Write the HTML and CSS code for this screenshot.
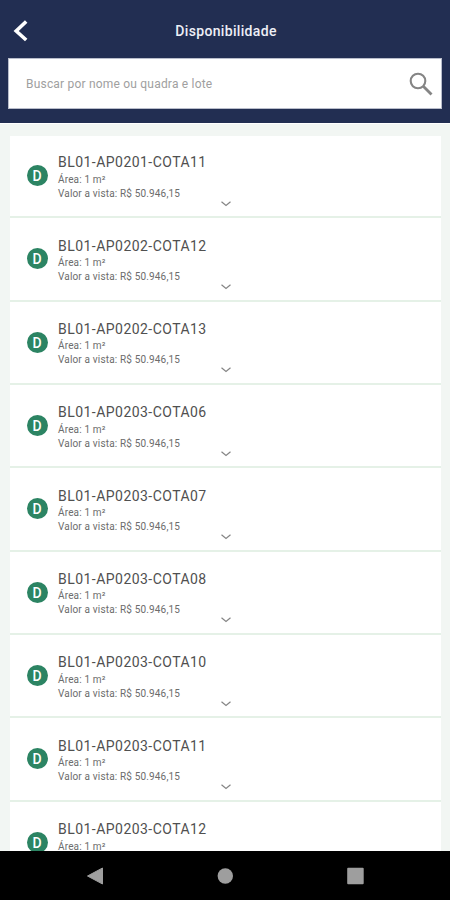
FILE: index.html
```html
<!DOCTYPE html>
<html lang="pt-BR">
<head>
<meta charset="utf-8">
<title>Disponibilidade</title>
<link rel="stylesheet" href="styles.css">
</head>
<body>
<svg class="defs" width="0" height="0"><symbol id="chevron" viewBox="0 0 12 8"><path d="M1.500 1.700 6 5.500l4.500-3.800" fill="none" stroke="#858585" stroke-width="1.200"/></symbol></svg>
<div class="screen">
  <header class="header">
    <div class="titlebar">
      <svg class="back" width="16" height="22" viewBox="0 0 16 22"><path d="M13.200 1.500 3.200 11l10 9" fill="none" stroke="#fff" stroke-width="3.600"/></svg>
      <h1 class="title">Disponibilidade</h1>
    </div>
    <div class="search">
      <span class="placeholder">Buscar por nome ou quadra e lote</span>
      <svg class="lens" width="24" height="24" viewBox="0 0 24 24"><circle cx="9" cy="9" r="7.300" fill="none" stroke="#858585" stroke-width="2.100"/><path d="m14.500 14.500 8 8" stroke="#858585" stroke-width="2.800"/></svg>
    </div>
  </header>
  <main class="list">
    <article class="card"><span class="badge">D</span><div class="info"><h2 class="name">BL01-AP0201-COTA11</h2><p class="area">Área: 1 m²</p><p class="price">Valor a vista: R$ 50.946,15</p></div><svg class="chev"><use href="#chevron"/></svg></article>
    <article class="card"><span class="badge">D</span><div class="info"><h2 class="name">BL01-AP0202-COTA12</h2><p class="area">Área: 1 m²</p><p class="price">Valor a vista: R$ 50.946,15</p></div><svg class="chev"><use href="#chevron"/></svg></article>
    <article class="card"><span class="badge">D</span><div class="info"><h2 class="name">BL01-AP0202-COTA13</h2><p class="area">Área: 1 m²</p><p class="price">Valor a vista: R$ 50.946,15</p></div><svg class="chev"><use href="#chevron"/></svg></article>
    <article class="card"><span class="badge">D</span><div class="info"><h2 class="name">BL01-AP0203-COTA06</h2><p class="area">Área: 1 m²</p><p class="price">Valor a vista: R$ 50.946,15</p></div><svg class="chev"><use href="#chevron"/></svg></article>
    <article class="card"><span class="badge">D</span><div class="info"><h2 class="name">BL01-AP0203-COTA07</h2><p class="area">Área: 1 m²</p><p class="price">Valor a vista: R$ 50.946,15</p></div><svg class="chev"><use href="#chevron"/></svg></article>
    <article class="card"><span class="badge">D</span><div class="info"><h2 class="name">BL01-AP0203-COTA08</h2><p class="area">Área: 1 m²</p><p class="price">Valor a vista: R$ 50.946,15</p></div><svg class="chev"><use href="#chevron"/></svg></article>
    <article class="card"><span class="badge">D</span><div class="info"><h2 class="name">BL01-AP0203-COTA10</h2><p class="area">Área: 1 m²</p><p class="price">Valor a vista: R$ 50.946,15</p></div><svg class="chev"><use href="#chevron"/></svg></article>
    <article class="card"><span class="badge">D</span><div class="info"><h2 class="name">BL01-AP0203-COTA11</h2><p class="area">Área: 1 m²</p><p class="price">Valor a vista: R$ 50.946,15</p></div><svg class="chev"><use href="#chevron"/></svg></article>
    <article class="card"><span class="badge">D</span><div class="info"><h2 class="name">BL01-AP0203-COTA12</h2><p class="area">Área: 1 m²</p></div></article>
  </main>
  <nav class="navbar">
    <svg width="18" height="20" viewBox="0 0 18 20"><path d="M1.500 10 16.500 2v16z" fill="#9e9e9e" stroke="#9e9e9e" stroke-linejoin="round"/></svg>
    <svg width="18" height="20" viewBox="0 0 18 20"><circle cx="9.300" cy="10" r="7.700" fill="#9e9e9e"/></svg>
    <svg width="18" height="20" viewBox="0 0 18 20"><rect x="1.200" y="1.700" width="16.500" height="16.500" rx="1" fill="#9e9e9e"/></svg>
  </nav>
</div>
</body>
</html>
```
FILE: styles.css
```css
* { box-sizing: border-box; }
body, h1, h2, p { margin: 0; font-weight: 400; }
body { font-family: Roboto, "Liberation Sans", sans-serif; }
.defs { display: block; height: 0; }
.screen {
  width: 450px;
  height: 900px;
  display: flex;
  flex-direction: column;
  overflow: hidden;
  background: #f2f6f3;
}
.header {
  flex: none;
  height: 123px;
  padding: 0 8px;
  background: #222e52;
}
.titlebar {
  height: 58px;
  display: grid;
  grid-template-columns: 40px 1fr 40px;
  align-items: center;
  padding-top: 4px;
}
.back { margin-left: 5px; }
.title {
  padding-left: 2px;
  text-align: center;
  font-size: 14px;
  font-weight: 500;
  letter-spacing: 0.33px;
  color: #eeeff6;
}
.search {
  height: 51px;
  display: flex;
  align-items: center;
  justify-content: space-between;
  padding: 0 8px 0 17px;
  background: #fff;
  border: 1px solid #b9bdcb;
}
.placeholder { font-size: 12px; color: #a0a0a0; letter-spacing: 0.2px; }
.list {
  flex: 1;
  min-height: 0;
  overflow: hidden;
  padding: 12px 9px 0 10px;
  border-top: 1px solid #fff;
}
.card {
  height: 83.350px;
  display: grid;
  grid-template-columns: 48px 1fr;
  position: relative;
  background: #fff;
  border-bottom: 2px solid #e5f1e7;
  padding-top: 17.300px;
}
.card:first-child { height: 82.300px; padding-top: 16.300px; }
.badge {
  width: 21px;
  height: 21px;
  margin: 12.700px 0 0 16.500px;
  border-radius: 50%;
  background: #2c8463;
  color: #fff;
  font-size: 14px;
  font-weight: 500;
  line-height: 22px;
  text-align: center;
}
.name { font-size: 14px; line-height: 20.500px; letter-spacing: 0.460px; color: #505050; }
.area, .price { font-size: 10px; line-height: 14px; letter-spacing: 0.160px; color: #6c6c6c; }
.chev {
  position: absolute;
  width: 12px;
  height: 8px;
  left: 210px;
  bottom: 8.700px;
}
.navbar {
  flex: none;
  height: 49px;
  display: flex;
  align-items: center;
  justify-content: center;
  gap: 112px;
  background: #000;
}
```
